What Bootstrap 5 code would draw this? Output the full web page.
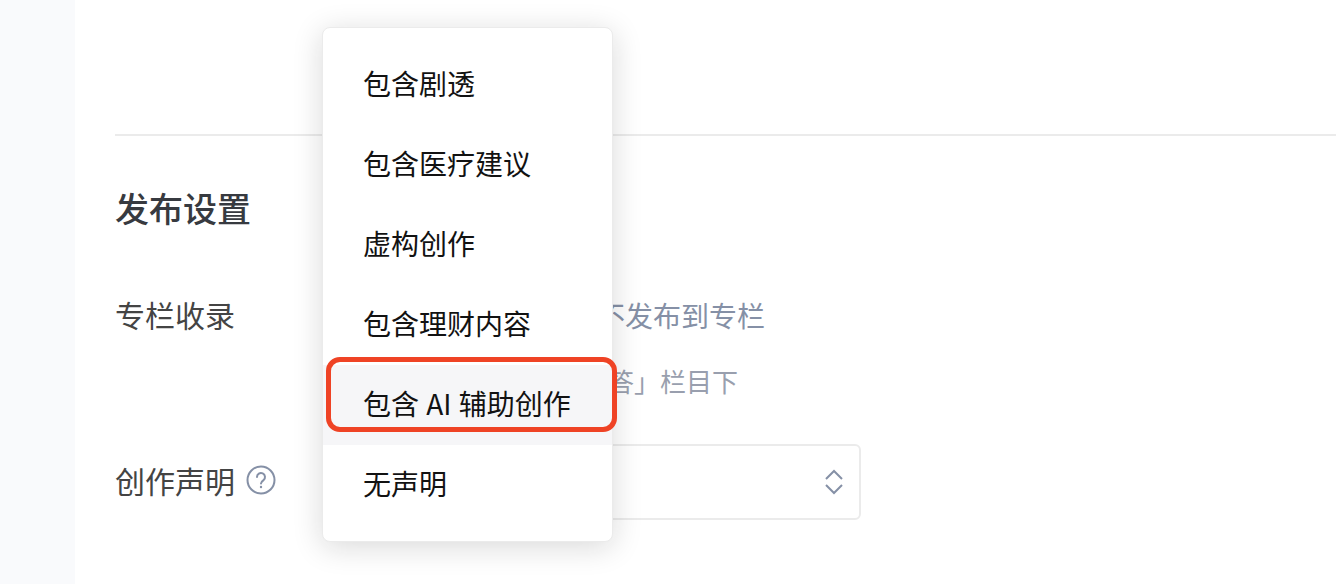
<!doctype html>
<html lang="zh"><head><meta charset="utf-8">
<link href="https://cdn.jsdelivr.net/npm/bootstrap@5.3.0/dist/css/bootstrap.min.css" rel="stylesheet">
<style>
html,body{height:100%;margin:0;overflow:hidden}
body{background:#f9fafc;font-family:"Noto Sans CJK SC","Liberation Sans",sans-serif;color:#121212}
.sheet{margin-left:75px;height:584px;background:#fff;padding:0 0 0 40px;position:relative;overflow:hidden}
.clip-line{height:136px;border-bottom:2px solid #ebebeb}
.sect-title{font-size:34px;line-height:44px;font-weight:500;color:#373a40;margin:50px 0 0 0}
.setting{display:flex}
.row-column{margin-top:64px}
.row-answer{margin-top:26px}
.row-statement{margin-top:44px;align-items:center}
.row-statement .lab{margin-bottom:4px}
.lab{width:207px;flex:none;font-size:30px;line-height:40px;color:#444;display:flex;align-items:center;gap:11px}
.hint{font-size:28px;line-height:40px;color:#8590a6;margin-left:275px;white-space:nowrap;padding-top:1px;margin-bottom:-1px}
.hint-soft{font-size:26px;color:#999fae;margin-left:286px}
.pick{width:539px;height:76px;border:2px solid #ebebeb;border-radius:6px;display:flex;align-items:center;justify-content:flex-end;padding-right:16px}
.pop{position:absolute;left:247px;top:27px;width:291px;height:515px;background:#fff;border:1px solid #ebebeb;border-radius:8px;box-shadow:0 5px 30px rgba(18,18,18,.16);padding:17px 0 0;overflow:hidden}
.pop-item{height:80px;padding:18px 40px 0;font-size:28px;line-height:40px;color:#121212;display:block;white-space:nowrap}
.pop-item.on{background:#f6f6f8;word-spacing:1px}
.redbox{position:absolute;left:251px;top:357px;width:291px;height:75px;border:5px solid #ef4325;border-radius:14px}
</style></head>
<body>
<main class="sheet">
 <div class="clip-line"></div>
 <h2 class="sect-title">发布设置</h2>
 <div class="setting row-column"><div class="lab">专栏收录</div><div class="hint">不发布到专栏</div></div>
 <div class="setting row-answer"><div class="lab"></div><div class="hint hint-soft">答」栏目下</div></div>
 <div class="setting row-statement"><div class="lab">创作声明
  <svg width="30" height="30" viewBox="0 0 30 30" fill="none" stroke="#8590a6" stroke-width="2"><circle cx="15" cy="15" r="13.500"/><path d="M11 12a4 4 0 1 1 6.500 3.100c-1.500 1.100-2.500 1.900-2.500 3.400" stroke-linecap="round"/><circle cx="15" cy="22" r="1.200" fill="#8590a6" stroke="none"/></svg></div>
  <div class="pick"><svg width="18" height="26" viewBox="0 0 18 26" fill="none" stroke="#8590a6" stroke-width="2"><path d="M1 10l8-8 8 8M1 16l8 8 8-8"/></svg></div></div>
 <div class="pop">
  <div class="pop-item">包含剧透</div><div class="pop-item">包含医疗建议</div><div class="pop-item">虚构创作</div><div class="pop-item">包含理财内容</div><div class="pop-item on">包含 AI 辅助创作</div><div class="pop-item">无声明</div>
 </div>
 <div class="redbox"></div>
</main>
<script src="https://cdn.jsdelivr.net/npm/bootstrap@5.3.0/dist/js/bootstrap.bundle.min.js"></script>
</body></html>
